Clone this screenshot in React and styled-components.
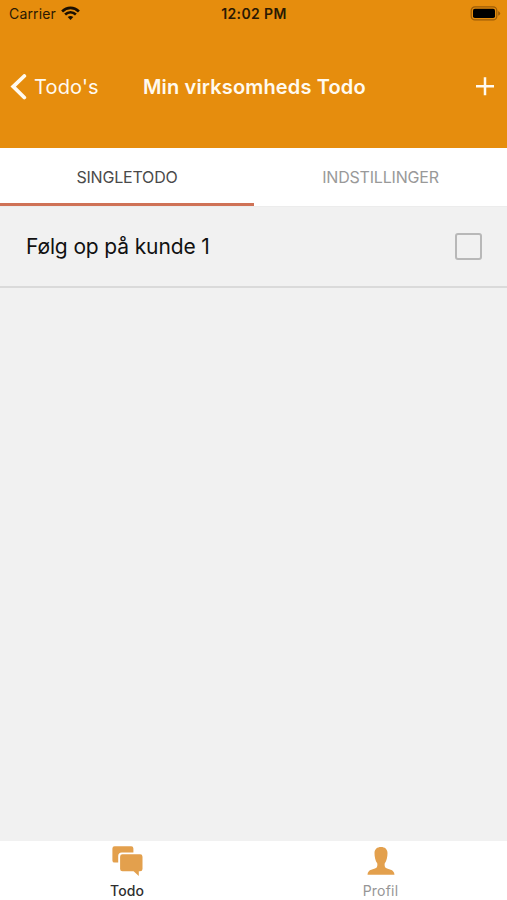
import React from 'react';
import styled, { createGlobalStyle } from 'styled-components';

const GlobalStyle = createGlobalStyle`
  * { box-sizing: border-box; }
  body { margin: 0; font-family: Inter, "Liberation Sans", sans-serif; }
  button { font: inherit; border: 0; padding: 0; background: none; }
`;

const Screen = styled.div`
  display: flex;
  flex-direction: column;
  height: 900px;
  width: 507px;
  overflow: hidden;
  background: #f1f1f1;
`;

const Header = styled.header`
  height: 148px;
  background: #e68d0d;
`;

const StatusBar = styled.div`
  display: grid;
  grid-template-columns: 1fr auto 1fr;
  align-items: center;
  height: 27px;
  padding: 0 6px 0 9px;
  color: #2a1903;
  font-size: 14px;
  line-height: 20px;
`;

const Carrier = styled.div`
  display: flex;
  align-items: center;
  gap: 5px;
  letter-spacing: 0.15px;
`;

const Clock = styled.div`
  margin-right: 2px;
  font-weight: 600;
  letter-spacing: 0.4px;
`;

const BatteryIcon = styled.svg`
  justify-self: end;
  display: block;
`;

const NavBar = styled.div`
  display: grid;
  grid-template-columns: 143px 1fr 32px;
  align-items: center;
  height: 120px;
  color: #fffaf0;
`;

const BackButton = styled.button`
  display: flex;
  align-items: center;
  gap: 7px;
  padding-left: 10px;
  color: inherit;
  font-size: 20px;
  line-height: 26px;
  letter-spacing: 0.15px;
`;

const Title = styled.h1`
  margin: 0;
  font-size: 20px;
  line-height: 26px;
  font-weight: 600;
  letter-spacing: 0.15px;
  white-space: nowrap;
`;

const AddButton = styled.button`
  display: flex;
  color: inherit;
`;

const Tabs = styled.div`
  display: grid;
  grid-template-columns: 254px 253px;
  height: 58px;
  background: #fff;
`;

const Tab = styled.button`
  height: 58px;
  padding-top: 2px;
  border-bottom: 3px solid ${(p) => (p.$active ? '#cf7256' : 'transparent')};
  color: ${(p) => (p.$active ? '#4a4a4a' : '#999')};
  font-size: 16px;
  letter-spacing: -0.2px;
`;

const List = styled.main`
  flex: 1;
`;

const Row = styled.label`
  display: flex;
  align-items: center;
  justify-content: space-between;
  height: 82px;
  padding: 0 25px 0 26px;
  border-top: 1px solid #ececec;
  border-bottom: 2px solid #dadada;
  color: #111;
  font-size: 21px;
`;

const RowText = styled.span`
  letter-spacing: -0.13px;
`;

const Checkbox = styled.span`
  width: 27px;
  height: 27px;
  border: 2px solid #b8b8b8;
  border-radius: 3px;
`;

const BottomBar = styled.nav`
  display: grid;
  grid-template-columns: 254px 253px;
  height: 59px;
  background: #fff;
`;

const BottomItem = styled.button`
  display: flex;
  flex-direction: column;
  align-items: center;
  gap: 5px;
  padding-top: 4px;
  color: ${(p) => (p.$active ? '#2f2f2f' : '#969696')};
  font-size: 14px;
  font-weight: ${(p) => (p.$active ? 500 : 400)};
  line-height: 18px;
  letter-spacing: ${(p) => (p.$active ? 0.05 : 0.2)}px;
`;

export default function App() {
  return (
    <>
      <GlobalStyle />
      <Screen>
        <Header>
          <StatusBar>
            <Carrier>
              Carrier
              <svg width="19" height="15" viewBox="0 0 19 15" fill="none" stroke="#1b1002" strokeWidth="2.7">
                <path d="M1.1 5.4C6 .8 13 .8 17.9 5.4" />
                <path d="M4.1 8.5c3.2-2.9 7.6-2.9 10.8 0" />
                <path d="M6.7 11Q9.5 8.8 12.3 11L9.5 14Z" fill="#1b1002" stroke="none" />
              </svg>
            </Carrier>
            <Clock>12:02 PM</Clock>
            <BatteryIcon width="31" height="15" viewBox="0 0 31 15">
              <rect x="1.2" y=".9" width="25.6" height="13" rx="3.7" fill="none" stroke="#9b5c08" strokeWidth="1.2" />
              <rect x="3" y="2.7" width="22" height="9.4" rx="1.8" fill="#000" />
              <path d="M28.2 5q4 2.4 0 4.8Z" fill="#9b5c08" />
            </BatteryIcon>
          </StatusBar>
          <NavBar>
            <BackButton>
              <svg width="17" height="26" viewBox="0 0 17 26" fill="none" stroke="currentColor" strokeWidth="3.8">
                <path d="M14.3 2 3.2 12.6l11.1 10.9" strokeLinecap="round" />
              </svg>
              Todo's
            </BackButton>
            <Title>Min virksomheds Todo</Title>
            <AddButton aria-label="Add">
              <svg width="20" height="20" viewBox="0 0 20 20" stroke="currentColor" strokeWidth="2.5">
                <path d="M1 9.3h18M10 .3v18" />
              </svg>
            </AddButton>
          </NavBar>
        </Header>
        <Tabs>
          <Tab $active>SINGLETODO</Tab>
          <Tab>INDSTILLINGER</Tab>
        </Tabs>
        <List>
          <Row>
            <RowText>Følg op på kunde 1</RowText>
            <Checkbox />
          </Row>
        </List>
        <BottomBar>
          <BottomItem $active>
            <svg width="32" height="32" viewBox="0 0 32 32" fill="#e3a04d">
              <path d="M3.6 1.2h16.6a2.2 2.2 0 0 1 2.2 2.2v4H10.8a3.6 3.6 0 0 0-3.6 3.6v6.6H3.6a2.2 2.2 0 0 1-2.2-2.2v-12a2.2 2.2 0 0 1 2.2-2.2Z" />
              <path d="M11.5 9.3h17.600a2.4 2.4 0 0 1 2.4 2.4v12.200a2.4 2.4 0 0 1-2.4 2.4h-1.3v4.600l-5.2-4.600H11.500a2.4 2.4 0 0 1-2.4-2.4v-12.200a2.4 2.4 0 0 1 2.400-2.400Z" />
            </svg>
            Todo
          </BottomItem>
          <BottomItem>
            <svg width="32" height="32" viewBox="0 0 32 32" fill="#e3a04d">
              <path d="M16 2C19.800 2 22.500 4.100 22.500 8C22.500 11.800 21.800 15.600 19.700 18.400C19.500 20.300 19.700 21.900 20.600 22.700C22.600 24.400 29.300 23.700 29.500 29.800H2.500C2.700 23.700 9.400 24.400 11.400 22.700C12.300 21.900 12.500 20.300 12.300 18.400C10.200 15.600 9.500 11.800 9.500 8C9.500 4.100 12.200 2 16 2Z" />
            </svg>
            Profil
          </BottomItem>
        </BottomBar>
      </Screen>
    </>
  );
}
